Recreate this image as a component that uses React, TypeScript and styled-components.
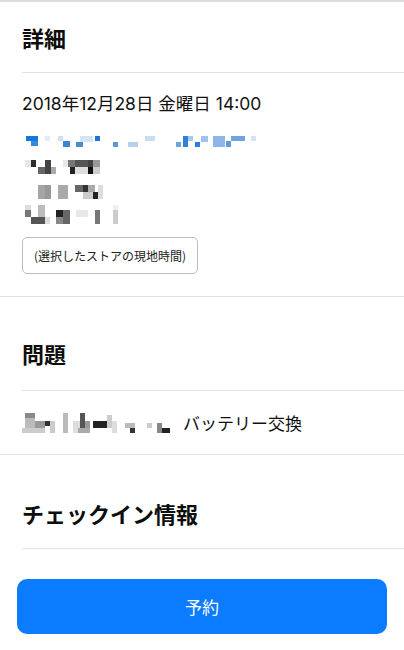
import React from "react";
import styled, { createGlobalStyle } from "styled-components";

const GlobalStyle = createGlobalStyle`
  html, body {
    margin: 0;
    padding: 0;
    background: #ffffff;
  }
  body {
    font-family: "Inter", "Noto Sans CJK JP", sans-serif;
    color: #111111;
    -webkit-font-smoothing: antialiased;
  }
`;

type Block = [number, number, number, number, string];

// pixelated (redacted) content, drawn as blocks
const addressBlocks: Block[] = [
  [4, 3, 12, 5, "#1777e0"],
  [9, 8, 7, 5, "#3b87dc"],
  [23, 3, 5, 5, "#e3ecf7"],
  [36, 3, 5, 5, "#cfe0f4"],
  [41, 8, 7, 6, "#3d84d4"],
  [58, 3, 13, 6, "#d5e3f3"],
  [54, 9, 7, 5, "#4a8bd5"],
  [73, 3, 5, 5, "#1c74d8"],
  [91, 9, 5, 5, "#5b96d8"],
  [106, 9, 10, 5, "#b7d0ee"],
  [123, 3, 10, 5, "#cadcf2"],
  [154, 9, 5, 5, "#6da1e0"],
  [161, 3, 5, 11, "#2f7fdc"],
  [166, 3, 5, 5, "#a9c8ee"],
  [173, 9, 5, 5, "#2b7ee0"],
  [179, 3, 7, 6, "#9fc1ec"],
  [191, 3, 12, 11, "#8db5e8"],
  [204, 8, 5, 6, "#5f9ae0"],
  [209, 3, 14, 5, "#6fa3e4"],
  [229, 3, 5, 5, "#d5e4f5"],

  [3, 27, 6, 7, "#e6e6e6"],
  [9, 27, 5, 7, "#2d2d2d"],
  [16, 34, 7, 7, "#666666"],
  [23, 27, 6, 14, "#444444"],
  [29, 34, 5, 7, "#aaaaaa"],
  [41, 27, 5, 7, "#e8e8e8"],
  [46, 27, 7, 7, "#777777"],
  [53, 27, 13, 7, "#555555"],
  [66, 27, 5, 7, "#444444"],
  [71, 27, 7, 7, "#999999"],
  [48, 34, 5, 7, "#222222"],
  [53, 34, 13, 7, "#dddddd"],
  [66, 34, 5, 7, "#111111"],
  [71, 34, 7, 7, "#cccccc"],

  [16, 52, 7, 14, "#a5a5a5"],
  [23, 52, 6, 14, "#999999"],
  [36, 52, 10, 14, "#aaaaaa"],
  [53, 52, 8, 7, "#666666"],
  [61, 52, 5, 7, "#333333"],
  [66, 52, 7, 7, "#aaaaaa"],
  [61, 59, 10, 7, "#cccccc"],
  [71, 59, 5, 7, "#222222"],
  [76, 52, 5, 14, "#dddddd"],

  [3, 72, 6, 5, "#dddddd"],
  [3, 77, 6, 7, "#777777"],
  [9, 84, 14, 7, "#555555"],
  [16, 72, 7, 12, "#bbbbbb"],
  [23, 84, 5, 7, "#dddddd"],
  [34, 77, 7, 7, "#222222"],
  [41, 77, 7, 14, "#666666"],
  [34, 84, 7, 7, "#888888"],
  [54, 77, 12, 7, "#e8e8e8"],
  [73, 77, 5, 14, "#777777"],
  [91, 72, 5, 5, "#eeeeee"],
  [91, 77, 5, 14, "#cccccc"],
];

const issueBlocks: Block[] = [
  [3, 2, 10, 5, "#8a8a8a"],
  [3, 7, 10, 10, "#bbbbbb"],
  [0, 17, 23, 5, "#cccccc"],
  [13, 10, 10, 7, "#999999"],
  [23, 10, 5, 5, "#333333"],
  [28, 10, 5, 12, "#cccccc"],
  [41, 2, 5, 20, "#bbbbbb"],
  [51, 10, 7, 12, "#dddddd"],
  [58, 2, 5, 20, "#555555"],
  [63, 10, 5, 7, "#999999"],
  [56, 17, 12, 5, "#aaaaaa"],
  [71, 10, 14, 7, "#222222"],
  [85, 4, 5, 13, "#cccccc"],
  [90, 10, 5, 12, "#dddddd"],
  [103, 12, 10, 5, "#bbbbbb"],
  [108, 17, 5, 5, "#333333"],
  [125, 12, 5, 5, "#cccccc"],
  [135, 12, 5, 10, "#888888"],
  [140, 17, 8, 5, "#222222"],
];

const Page = styled.div`
  width: 404px;
  min-height: 650px;
  display: flex;
  flex-direction: column;
  background: #ffffff;
`;

const Rule = styled.div<{ $inset?: boolean; $thick?: boolean }>`
  height: ${(p) => (p.$thick ? "2px" : "1px")};
  margin-left: ${(p) => (p.$inset ? "22px" : "0")};
  background: ${(p) => (p.$thick ? "#dcdcdc" : "#e2e2e2")};
`;

const Spacer = styled.div<{ $size: number }>`
  height: ${(p) => p.$size}px;
`;

const SectionHeader = styled.div<{ $height?: number }>`
  height: ${(p) => p.$height ?? 70}px;
  display: flex;
  align-items: center;
  padding: 0 22px;
`;

const Heading = styled.h2`
  margin: 0;
  font-family: "Noto Sans CJK JP", sans-serif;
  font-size: 22px;
  line-height: 30px;
  font-weight: 700;
  color: #0d0d0d;
`;

const DetailBody = styled.div`
  display: flex;
  flex-direction: column;
  align-items: flex-start;
  padding: 19px 22px 22px;
`;

const DateText = styled.div`
  font-size: 17.5px;
  line-height: 24px;
  color: #111111;
`;

const MosaicArt = styled.svg<{ $top?: number }>`
  display: block;
  flex-shrink: 0;
  margin-top: ${(p) => p.$top ?? 0}px;
`;

const NoteBox = styled.div`
  margin-top: 12px;
  height: 37px;
  padding: 0 11px;
  display: flex;
  align-items: center;
  box-sizing: border-box;
  border: 1px solid #bdbdbd;
  border-radius: 5px;
  font-family: "Noto Sans CJK JP", sans-serif;
  font-size: 12px;
  color: #222222;
`;

const IssueRow = styled.div`
  height: 63px;
  display: flex;
  align-items: center;
  gap: 10px;
  padding: 0 22px;
`;

const IssueText = styled.span`
  font-family: "Noto Sans CJK JP", sans-serif;
  font-size: 17px;
  color: #111111;
`;

const ButtonBar = styled.div`
  padding: 30px 17px 16px;
`;

const PrimaryButton = styled.button`
  width: 100%;
  height: 55px;
  border: none;
  border-radius: 10px;
  background: #0b7bff;
  color: #ffffff;
  font-family: "Noto Sans CJK JP", sans-serif;
  font-size: 17px;
  cursor: pointer;
`;

function Mosaic({ blocks, width, height, top }: { blocks: Block[]; width: number; height: number; top?: number }) {
  return (
    <MosaicArt $top={top} width={width} height={height} viewBox={`0 0 ${width} ${height}`}>
      {blocks.map(([x, y, w, h, c], i) => (
        <rect key={i} x={x} y={y} width={w} height={h} fill={c} />
      ))}
    </MosaicArt>
  );
}

export default function App() {
  return (
    <Page>
      <GlobalStyle />
      <Rule $thick />
      <SectionHeader>
        <Heading>詳細</Heading>
      </SectionHeader>
      <Rule $inset />
      <DetailBody>
        <DateText>2018年12月28日 金曜日 14:00</DateText>
        <Mosaic blocks={addressBlocks} width={240} height={92} top={17} />
        <NoteBox>(選択したストアの現地時間)</NoteBox>
      </DetailBody>
      <Rule />

      <Spacer $size={19} />
      <SectionHeader $height={74}>
        <Heading>問題</Heading>
      </SectionHeader>
      <Rule $inset />
      <IssueRow>
        <Mosaic blocks={issueBlocks} width={151} height={24} />
        <IssueText>バッテリー交換</IssueText>
      </IssueRow>
      <Rule />

      <Spacer $size={23} />
      <SectionHeader>
        <Heading>チェックイン情報</Heading>
      </SectionHeader>
      <Rule $inset />
      <ButtonBar>
        <PrimaryButton>予約</PrimaryButton>
      </ButtonBar>
    </Page>
  );
}
